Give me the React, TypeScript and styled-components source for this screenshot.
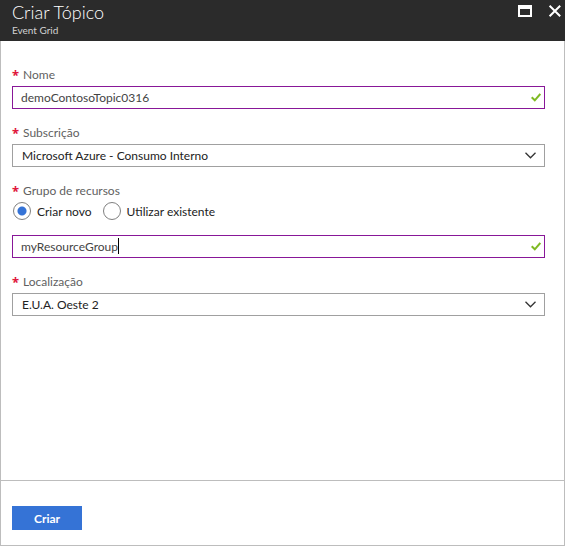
import React, { useState } from "react";
import styled, { createGlobalStyle } from "styled-components";

const GlobalStyle = createGlobalStyle`
  *, *::before, *::after { box-sizing: border-box; }
  body { margin: 0; background: #fff; }
  body, input, select, button { font-family: Lato, "Open Sans", sans-serif; font-size: 12px; }
`;

const Blade = styled.form`
  display: flex;
  flex-direction: column;
  min-height: 100vh;
`;

const Header = styled.header`
  display: flex;
  justify-content: space-between;
  height: 41px;
  padding: 0 3px 0 12px;
  background: #2b2b2b;
  color: #fff;
`;

const Title = styled.h1`
  margin: 0;
  font: 300 18px/24px Lato, sans-serif;
`;

const Subtitle = styled.p`
  margin: 0;
  font: 400 10px/12px Lato, sans-serif;
  color: #d2d2d2;
`;

const WindowActions = styled.div`
  display: flex;
  align-items: flex-start;
  gap: 16px;
  padding-top: 4px;
`;

const IconButton = styled.button`
  display: flex;
  padding: 0;
  border: 0;
  background: none;
  color: #fff;
  cursor: pointer;
`;

const Body = styled.main`
  flex: 1;
  display: flex;
  flex-direction: column;
  gap: 16px;
  padding: 26px 19px 16px 11px;
  border: solid #bdbdbd;
  border-width: 0 1px;
`;

const Field = styled.div`
  display: flex;
  flex-direction: column;
  gap: 3px;
`;

const Group = styled.fieldset`
  min-width: 0;
  margin: 0;
  padding: 0;
  border: 0;
`;

const labelStyle = `
  display: flex;
  gap: 5px;
  height: 16px;
  padding: 0;
  line-height: 16px;
  color: #5f5f5f;
`;

const Label = styled.label`${labelStyle}`;
const Legend = styled.legend`${labelStyle} margin-bottom: 3px;`;

const Required = styled.span`
  width: 6px;
  font: 700 13px/16px "Noto Sans", sans-serif;
  color: #e0143c;
`;

const Control = styled.div`
  position: relative;
  display: flex;
  height: 23px;
`;

const TextInput = styled.input`
  width: 100%;
  padding: 0 24px 0 8px;
  border: 1px solid #881798;
  border-radius: 0;
  outline: 0;
  background: #fff;
  color: #444;
  caret-color: transparent;
`;

const Select = styled.select`
  width: 100%;
  padding: 0 30px 0 9px;
  border: 1px solid #a0a0a0;
  border-radius: 0;
  appearance: none;
  background: #fff;
  color: #222;
`;

const Adornment = styled.span<{ $right: number }>`
  position: absolute;
  top: 0;
  bottom: 0;
  right: ${(p) => p.$right}px;
  display: flex;
  align-items: center;
  pointer-events: none;
`;

const Caret = styled.span`
  position: absolute;
  top: 3px;
  left: 106px;
  width: 1px;
  height: 16px;
  background: #000;
`;

const RadioRow = styled.div`
  display: flex;
  gap: 10px;
  margin-bottom: 15px;
`;

const RadioLabel = styled.label`
  display: flex;
  align-items: center;
  gap: 6px;
  height: 18px;
  padding-left: 1px;
  color: #222;
`;

const Radio = styled.input`
  appearance: none;
  width: 18px;
  height: 18px;
  margin: 0;
  border: 1px solid #808080;
  border-radius: 50%;
  background: #fff;

  &:checked {
    background: radial-gradient(circle, #3573d6 4px, #fff 5px);
  }
`;

const Footer = styled.footer`
  padding: 25px 11px 15px;
  border: 1px solid #bdbdbd;
`;

const SubmitButton = styled.button`
  display: block;
  width: 70px;
  height: 24px;
  padding: 0;
  border: 0;
  background: #3573d6;
  color: #fff;
  font-weight: 700;
  cursor: pointer;
`;

const Valid = () => (
  <Adornment $right={4}>
    <svg width="10" height="9" viewBox="0 0 10 9" fill="none" aria-hidden="true">
      <path d="M.7 4.2 3.8 7.3 9.3 1" stroke="#7fba23" strokeWidth="2" />
    </svg>
  </Adornment>
);

const Chevron = () => (
  <Adornment $right={9}>
    <svg width="11" height="7" viewBox="0 0 11 7" fill="none" aria-hidden="true">
      <path d="M.5.8 5.5 5.8 10.5.8" stroke="#333" strokeWidth="1.3" />
    </svg>
  </Adornment>
);

const Star = () => <Required aria-hidden="true">*</Required>;

export default function App() {
  const [name, setName] = useState("demoContosoTopic0316");
  const [group, setGroup] = useState("myResourceGroup");
  const [mode, setMode] = useState("new");

  return (
    <Blade onSubmit={(e) => e.preventDefault()}>
      <GlobalStyle />
      <Header>
        <div>
          <Title>Criar Tópico</Title>
          <Subtitle>Event Grid</Subtitle>
        </div>
        <WindowActions>
          <IconButton type="button" aria-label="Maximizar">
            <svg width="14" height="14" viewBox="0 0 14 14">
              <path fill="currentColor" fillRule="evenodd" d="M0 1H14V13H0ZM2 5V11H12V5Z" />
            </svg>
          </IconButton>
          <IconButton type="button" aria-label="Fechar">
            <svg width="14" height="14" viewBox="0 0 14 14" fill="none">
              <path stroke="currentColor" strokeWidth="2" d="M1.6 1.7 12.2 12.3M12.2 1.7 1.6 12.3" />
            </svg>
          </IconButton>
        </WindowActions>
      </Header>
      <Body>
        <Field>
          <Label htmlFor="name"><Star />Nome</Label>
          <Control>
            <TextInput id="name" value={name} spellCheck={false} onChange={(e) => setName(e.target.value)} />
            <Valid />
          </Control>
        </Field>
        <Field>
          <Label htmlFor="subscription"><Star />Subscrição</Label>
          <Control>
            <Select id="subscription">
              <option>Microsoft Azure - Consumo Interno</option>
            </Select>
            <Chevron />
          </Control>
        </Field>
        <Group>
          <Legend><Star />Grupo de recursos</Legend>
          <RadioRow>
            <RadioLabel>
              <Radio type="radio" name="mode" checked={mode === "new"} onChange={() => setMode("new")} />
              Criar novo
            </RadioLabel>
            <RadioLabel>
              <Radio type="radio" name="mode" checked={mode === "existing"} onChange={() => setMode("existing")} />
              Utilizar existente
            </RadioLabel>
          </RadioRow>
          <Control>
            <TextInput aria-label="Grupo de recursos" value={group} spellCheck={false} onChange={(e) => setGroup(e.target.value)} />
            <Caret />
            <Valid />
          </Control>
        </Group>
        <Field>
          <Label htmlFor="location"><Star />Localização</Label>
          <Control>
            <Select id="location">
              <option>E.U.A. Oeste 2</option>
            </Select>
            <Chevron />
          </Control>
        </Field>
      </Body>
      <Footer>
        <SubmitButton type="submit">Criar</SubmitButton>
      </Footer>
    </Blade>
  );
}
